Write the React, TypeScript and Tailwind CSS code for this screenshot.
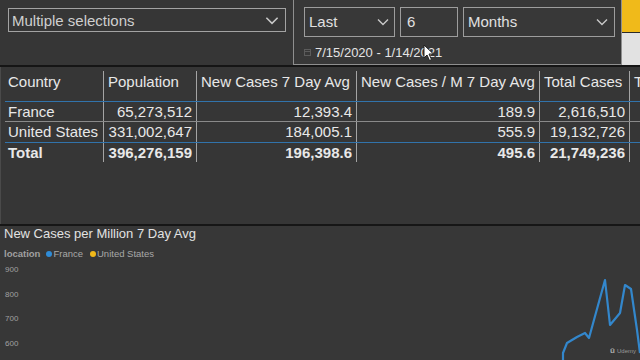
import React from "react";

const Chevron = ({ className = "" }: { className?: string }) => (
  <svg width="12" height="8" viewBox="0 0 12 8" className={className}>
    <polyline points="1,1.5 6,6.5 11,1.5" fill="none" stroke="#c8c8c8" strokeWidth="1.4" />
  </svg>
);

const cols = [
  { w: "w-[100px]" },
  { w: "w-[93px]" },
  { w: "w-[160px]" },
  { w: "w-[183px]" },
  { w: "w-[90px]" },
  { w: "w-[20px]" },
];

const header = ["Country", "Population", "New Cases 7 Day Avg", "New Cases / M 7 Day Avg", "Total Cases", "T"];
const rows = [
  ["France", "65,273,512", "12,393.4", "189.9", "2,616,510", ""],
  ["United States", "331,002,647", "184,005.1", "555.9", "19,132,726", ""],
];
const total = ["Total", "396,276,159", "196,398.6", "495.6", "21,749,236", ""];

function Row({ cells, bold, h, header: isHeader }: { cells: string[]; bold?: boolean; h: string; header?: boolean }) {
  return (
    <div className={`flex ${h}`}>
      {cells.map((c, i) => (
        <div
          key={i}
          className={`${cols[i].w} shrink-0 ${i < 5 ? "border-r border-[#a4a4a4]" : ""} ${
            i === 0 || isHeader ? "text-left pl-[4px]" : "text-right pr-[4px]"
          } ${isHeader ? "pt-[1px]" : ""} whitespace-nowrap overflow-hidden leading-[19px] ${bold ? "font-bold" : ""}`}
        >
          {c}
        </div>
      ))}
    </div>
  );
}

export default function App() {
  const pts = [
    [563, 360], [563, 353], [567, 343], [577, 337], [585, 333], [589, 338], [605, 280], [610, 325],
    [620, 313], [625, 285], [631, 289], [637, 330], [640, 353],
  ]
    .map(([x, y]) => `${x},${y - 226}`)
    .join(" ");

  return (
    <div
      className="w-[640px] h-[360px] overflow-hidden bg-[#363636] flex flex-col relative"
      style={{ fontFamily: '"Liberation Sans", Arial, sans-serif' }}
    >
      {/* Top slicers */}
      <div className="h-[65px] flex shrink-0">
        <div className="w-[293px] shrink-0 pl-[8px] pr-[7px] pt-[8px]">
          <div className="h-[24px] border border-[#a3a3a3] flex items-center justify-between pl-[3px] pr-[6px]">
            <span className="text-[15px] text-[#cfcfcf] leading-none">Multiple selections</span>
            <Chevron className="w-[14px] h-[9px]" />
          </div>
        </div>
        <div className="w-[329px] shrink-0 border-l border-r border-b border-[#8f8f8f] pl-[10px] pt-[7px] bg-[#383838]">
          <div className="flex gap-[5px] h-[30px]">
            <div className="w-[91px] border border-[#9d9d9d] flex items-center justify-between pl-[4px] pr-[5px]">
              <span className="text-[15px] text-[#e0e0e0]">Last</span>
              <Chevron />
            </div>
            <div className="w-[58px] border border-[#9d9d9d] flex items-center pl-[6px]">
              <span className="text-[15px] text-[#e0e0e0]">6</span>
            </div>
            <div className="w-[152px] border border-[#9d9d9d] flex items-center justify-between pl-[4px] pr-[6px]">
              <span className="text-[15px] text-[#e0e0e0]">Months</span>
              <Chevron />
            </div>
          </div>
          <div className="flex items-center mt-[9px] gap-[4px]">
            <svg width="7" height="7" viewBox="0 0 7 7">
              <rect x="0.5" y="0.5" width="6" height="6" fill="none" stroke="#5c5c5c" strokeWidth="1" />
              <line x1="0.5" y1="2.5" x2="6.5" y2="2.5" stroke="#5c5c5c" />
            </svg>
            <span className="text-[13px] text-[#e4e4e4] leading-none">7/15/2020 - 1/14/2021</span>
          </div>
        </div>
        <div className="flex-1 flex flex-col">
          <div className="h-[33px] bg-[#f0ba1a] border-b border-[#2a2a2a]" />
          <div className="flex-1 bg-[#e2e2e2]" />
        </div>
      </div>
      <div className="h-[2px] bg-[#151515] shrink-0" />

      {/* Table */}
      <div className="h-[157px] shrink-0 pt-[4px] text-[15px] text-[#e8e8e8] border-l border-[#4a4a4a]">
        <div className="pl-[3px]">
          <Row cells={header} h="h-[30px]" header />
        </div>
        <div className="ml-[4px] h-[1px] bg-[#3173ab]" />
        <div className="pl-[3px]">
          <Row cells={rows[0]} h="h-[19px]" />
        </div>
        <div className="ml-[4px] h-[1px] bg-[#8a8a8a]" />
        <div className="pl-[3px]">
          <Row cells={rows[1]} h="h-[20px]" />
        </div>
        <div className="ml-[4px] h-[1px] bg-[#3173ab]" />
        <div className="pl-[3px]">
          <Row cells={total} h="h-[19px]" bold />
        </div>
      </div>
      <div className="h-[2px] bg-[#161616] shrink-0" />

      {/* Chart */}
      <div className="flex-1 relative pl-[4px] bg-[#373737]">
        <div className="text-[13px] text-[#e2e2e2] leading-[16px]">New Cases per Million 7 Day Avg</div>
        <div className="flex items-center mt-[6px] text-[9.5px] leading-[12px] text-[#a8a8a8]">
          <span className="font-bold text-[#a0a0a0] mr-[6px]">location</span>
          <span className="w-[6px] h-[6px] rounded-full bg-[#2f8bd6] mr-[1px]" />
          <span className="mr-[7px]">France</span>
          <span className="w-[6px] h-[6px] rounded-full bg-[#f0b81a] mr-[1px]" />
          <span>United States</span>
        </div>
        <div className="flex flex-col text-[8px] text-[#a0a0a0] leading-[10px] gap-[14.7px] mt-[5px] pl-[1px]">
          <span>900</span>
          <span>800</span>
          <span>700</span>
          <span>600</span>
        </div>
        <svg className="absolute inset-0 pointer-events-none" width="640" height="134" viewBox="0 0 640 134">
          <polyline points={pts} fill="none" stroke="#3387cc" strokeWidth="2.2" strokeLinejoin="round" />
        </svg>
        <div className="absolute right-[4px] bottom-[3px] flex items-center gap-[2px] text-[6px] text-[#9a9a9a]">
          <span className="font-bold text-[8px] text-[#aaaaaa]">ū</span>
          <span>Udemy</span>
        </div>
      </div>

      {/* mouse cursor */}
      <svg className="absolute left-[423px] top-[44px]" width="12" height="18" viewBox="0 0 12 18">
        <path d="M1 1 L1 14 L4 11 L6.5 16.5 L8.5 15.5 L6 10 L10.5 10 Z" fill="#ffffff" stroke="#222" strokeWidth="1" />
      </svg>
    </div>
  );
}
